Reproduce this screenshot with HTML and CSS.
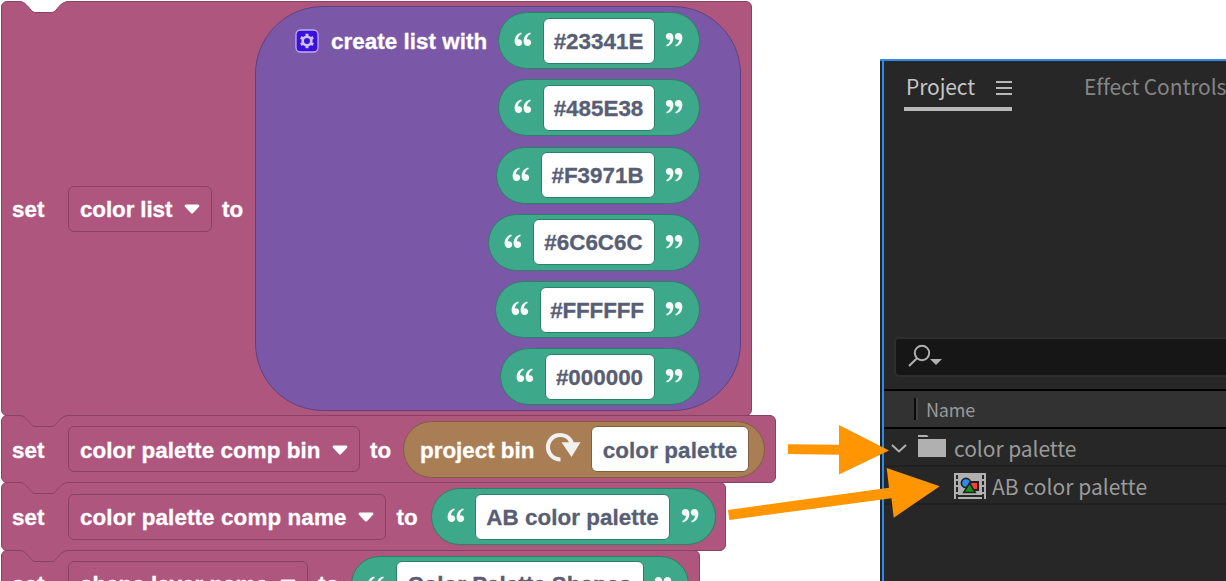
FILE: index.html
```html
<!DOCTYPE html>
<html lang="en">
<head>
<meta charset="utf-8">
<title>Color palette blocks</title>
<link rel="stylesheet" href="styles.css">
</head>
<body>
<svg class="defs" width="0" height="0">
  <symbol id="open" viewBox="0 0 18 15"><path d="M7.200 .6C3.200 1.500.6 5 .6 9.300c0 2.900 1.600 4.700 4 4.700 2.100 0 3.600-1.500 3.600-3.500S6.800 7.300 5 7.200c-.6 0-.9 0-1.200.2C4.100 4.800 5.500 2.800 7.800 1.900zM16.200 .6C12.200 1.500 9.600 5 9.600 9.300c0 2.900 1.600 4.700 4 4.700 2.100 0 3.600-1.500 3.600-3.500s-1.400-3.200-3.200-3.300c-.6 0-.9 0-1.200.2.300-2.600 1.700-4.600 4-5.500z"/></symbol>
  <symbol id="close" viewBox="0 0 18 15"><use href="#open" width="18" height="15" transform="rotate(180 9 7.500)"/></symbol>
  <symbol id="caret" viewBox="0 0 16 10"><path d="M2 .5h12c1.300 0 1.800 1.300 1 2.200L9.200 8.900c-.7.7-1.700.7-2.400 0L1 2.700C.2 1.800.7.5 2 .5z"/></symbol>
  <symbol id="notch" viewBox="0 0 50 13"><path d="M0 0V.5C5 .5 6.500 3 9 5.500S13 11.500 16 11.500H33C36 11.500 37.500 8 40 5.500S45 .5 50 .5V0z" stroke="none"/><path d="M0 .5C5 .5 6.500 3 9 5.500S13 11.500 16 11.500H33C36 11.500 37.500 8 40 5.500S45 .5 50 .5" fill="none"/></symbol>
</svg>
<main class="workspace">
  <section class="block block-list">
    <svg class="notch notch-top"><use href="#notch"/></svg>
    <span class="set">set</span>
    <span class="dropdown dd-list"><span class="t-list">color list</span><svg class="caret"><use href="#caret"/></svg></span>
    <span class="to">to</span>
    <div class="list">
      <div class="list-head">
        <svg class="gear" viewBox="0 0 24 24"><rect class="gear-box" x="1" y="1" width="22" height="22" rx="4.500"/><circle class="gear-ring" cx="12" cy="12" r="4.300"/><path class="gear-teeth" d="M12 7.500V4.800M12 16.500v2.700M8.100 9.750 5.800 8.400M15.900 14.250l2.300 1.350M8.100 14.250l-2.300 1.350M15.900 9.750l2.300-1.350"/></svg>
        <span class="t-create">create list with</span>
      </div>
      <div class="items">
        <div class="pill"><svg class="quote"><use href="#open"/></svg><span class="field w112">#23341E</span><svg class="quote"><use href="#close"/></svg></div>
        <div class="pill"><svg class="quote"><use href="#open"/></svg><span class="field w112">#485E38</span><svg class="quote"><use href="#close"/></svg></div>
        <div class="pill"><svg class="quote"><use href="#open"/></svg><span class="field w114">#F3971B</span><svg class="quote"><use href="#close"/></svg></div>
        <div class="pill"><svg class="quote"><use href="#open"/></svg><span class="field w122">#6C6C6C</span><svg class="quote"><use href="#close"/></svg></div>
        <div class="pill"><svg class="quote"><use href="#open"/></svg><span class="field w115">#FFFFFF</span><svg class="quote"><use href="#close"/></svg></div>
        <div class="pill"><svg class="quote"><use href="#open"/></svg><span class="field w110">#000000</span><svg class="quote"><use href="#close"/></svg></div>
      </div>
    </div>
  </section>
  <section class="block block-bin">
    <svg class="notch"><use href="#notch"/></svg>
    <span class="set">set</span>
    <span class="dropdown dd-bin"><span class="t-bin">color palette comp bin</span><svg class="caret"><use href="#caret"/></svg></span>
    <span class="to">to</span>
    <div class="pill bin">
      <span class="t-project">project bin</span>
      <svg class="reload" viewBox="0 0 36 30"><path d="M15.500 27.500A12.300 12.300 0 1 1 26.800 11" fill="none" stroke="#f1f1f1" stroke-width="4"/><path d="M16.500 10.200h19L26.500 25z" fill="#f1f1f1"/></svg>
      <span class="field w158 wide">color palette</span>
    </div>
  </section>
  <section class="block block-name">
    <svg class="notch"><use href="#notch"/></svg>
    <span class="set">set</span>
    <span class="dropdown dd-name"><span class="t-name">color palette comp name</span><svg class="caret"><use href="#caret"/></svg></span>
    <span class="to">to</span>
    <div class="pill"><svg class="quote"><use href="#open"/></svg><span class="field w195 wide">AB color palette</span><svg class="quote"><use href="#close"/></svg></div>
  </section>
  <section class="block block-shape">
    <svg class="notch"><use href="#notch"/></svg>
    <span class="set">set</span>
    <span class="dropdown dd-shape"><span class="t-shape">shape layer name</span><svg class="caret"><use href="#caret"/></svg></span>
    <span class="to">to</span>
    <div class="pill"><svg class="quote"><use href="#open"/></svg><span class="field w248 wide">Color Palette Shapes</span><svg class="quote"><use href="#close"/></svg></div>
  </section>
</main>
<aside class="panel">
  <nav class="tabs">
    <div class="tab active"><span class="p-project">Project</span><svg class="menu" viewBox="0 0 16 14"><path d="M0 1h16M0 7h16M0 13h16"/></svg></div>
    <div class="tab"><span class="p-effect">Effect Controls</span></div>
  </nav>
  <div class="search"><svg class="magnifier" viewBox="0 0 36 24"><circle cx="14" cy="9" r="7.200"/><path d="M9 14.200 1 22"/><path class="solid" d="M22 15h12l-6 6z"/></svg></div>
  <div class="columns"><i class="divider"></i><span class="p-name">Name</span></div>
  <div class="row">
    <svg class="chevron" viewBox="0 0 16 9"><path d="m1 1 7 6.500L15 1"/></svg>
    <svg class="folder" viewBox="0 0 28 22"><path d="M0 0h9l1.500 2H0zM0 4h28v18H0z"/></svg>
    <span class="p-color">color palette</span>
  </div>
  <div class="row child">
    <svg class="comp" viewBox="0 0 32 26"><path fill="#b0b0b0" d="M0 0h32v26H0z"/><path fill="#272727" d="M2 2h2v4H2zm0 6h2v4H2zm0 6h2v5H2zm0 7h2v5H2zM28 2h2v4h-2zm0 6h2v4h-2zm0 6h2v5h-2zm0 7h2v5h-2zM4 22h24v2H4z"/><path fill="#ff3d3d" stroke="#202020" stroke-width="2" d="M15 9h9v8h-9z"/><circle cx="12" cy="10" r="4.600" fill="#2d8ceb" stroke="#202020" stroke-width="1.700"/><path fill="#149614" stroke="#202020" stroke-width="1.500" d="m15.500 10 5.800 9.500H9.700z"/></svg>
    <span class="p-ab">AB color palette</span>
  </div>
</aside>
<svg class="arrows" viewBox="0 0 1226 581"><path d="M788 444.300l51 .4V425l50 25.500-50 24V454.700l-51-.7z"/><path d="M728 510l161-22.300-2.300-19.700 53 18.300-46 31.400-2.300-19.400-162.100 21.700z"/></svg>
</body>
</html>
```

FILE: styles.css
```css
* { box-sizing: border-box; }
body {
  margin: 0; width: 1226px; height: 581px; overflow: hidden; position: relative;
  display: flex; background: #fff;
  font: bold 22.4px/26px "Liberation Sans", Arial, sans-serif; color: #fff;
}
span { white-space: nowrap; }
svg { display: block; flex: none; }
.defs { position: absolute; }
.workspace {
  width: 880px; height: 581px; overflow: hidden; flex: none; padding: 1px 0 0 1px;
  -webkit-text-stroke: .3px currentColor;
}

.block {
  position: relative; display: flex; align-items: center;
  height: 68px; margin-bottom: -1px; padding-left: 10px;
  background: #af567f; border: 1px solid #884163; border-radius: 6px;
}
.block-list { width: 751px; height: 415px; }
.block-bin { width: 775px; height: 68px; }
.block-name { width: 725px; height: 69px; }
.block-shape { width: 699px; }
.notch { position: absolute; left: 17px; top: -1px; width: 50px; height: 13px; fill: #af567f; stroke: #884163; }
.notch-top { fill: #fff; }
.set { width: 56px; flex: none; padding-top: 2px; }
.dropdown {
  display: flex; align-items: center; justify-content: space-between; flex: none;
  height: 46px; padding: 2px 11px 0; border: 1px solid #884163; border-radius: 6px;
}
.dd-list { width: 144px; }
.dd-bin { width: 292px; letter-spacing: .08px; }
.dd-name { width: 318px; letter-spacing: .12px; }
.dd-shape { width: 240px; }
.t-list { letter-spacing: -.1px; }
.caret { width: 16px; height: 10px; fill: #fff; margin-top: -2px; }
.to { width: 33px; margin-left: 10px; flex: none; padding-top: 2px; }
.block-bin .set, .block-bin .to { padding-top: 3px; }
.block-bin .dropdown { padding-top: 4px; }
.block-name .to { width: 34px; margin-left: 10.500px; }

.list {
  display: flex; justify-content: space-between; flex: none;
  width: 486px; height: 405px; padding: 5px 40px 0 39px;
  background: #7b57a8; border: 1px solid #5c427e; border-radius: 68px;
}
.list-head { display: flex; align-items: center; gap: 12px; height: 58px; }
.t-create { padding-top: 1px; letter-spacing: .05px; }
.gear { width: 24px; height: 24px; }
.gear-box { fill: #3a0fe0; stroke: #bcb0e8; stroke-width: 1.300; }
.gear-ring { fill: none; stroke: #cdc3f3; stroke-width: 2.600; }
.gear-teeth { stroke: #cdc3f3; stroke-width: 3; }
.items { display: flex; flex-direction: column; align-items: flex-end; gap: 10.250px; }

.pill {
  display: flex; align-items: center; justify-content: space-between; flex: none;
  height: 57px; padding: 0 16px 0 15px; gap: 10.500px;
  background: #3da88a; border: 1px solid #2e7e68; border-radius: 29px;
}
.quote { width: 18px; height: 15px; fill: #fff; margin-top: -2px; opacity: .95; }
.field {
  height: 46px; padding-top: 10px; text-align: center; flex: none;
  background: #fff; color: #575e75; border: 1px solid #2e7e68; border-radius: 6px;
}
.w110 { width: 110px; }
.w112 { width: 112px; }
.w114 { width: 114px; }
.w115 { width: 115px; letter-spacing: -.15px; }
.w122 { width: 122px; }
.w158 { width: 158px; letter-spacing: .12px; }
.w195 { width: 195px; letter-spacing: .06px; }
.w248 { width: 248px; }
.bin { width: 362px; padding: 0 15px 0 16px; background: #a97e54; border-color: #7f5f3f; }
.bin .field { border-color: #7f5f3f; padding-top: 11px; }
.t-project { padding-top: 3px; }
.reload { width: 36px; height: 30px; margin: -4px -1px 0 0; }

.panel {
  position: relative; width: 346px; height: 522px; margin-top: 59px; flex: none;
  padding-left: 2px; background: #272727; border-top: 2px solid #2d8ceb;
  box-shadow: inset 2px 0 #202020, inset 4px 0 #2d8ceb;
  font: 21px/28px "Noto Sans CJK SC", "Noto Sans", sans-serif; color: #9a9a9a;
}
.tabs { display: flex; gap: 72px; height: 276px; padding: 9px 0 0 22px; }
.tab { height: 41px; padding-top: 2px; color: #858585; flex: none; }
.active {
  display: flex; justify-content: space-between; width: 108px; padding-left: 2px;
  color: #c5c5c5; border-bottom: 4px solid #b9b9b9;
}
.p-project { letter-spacing: -.1px; }
.p-effect { letter-spacing: -.1px; }
.menu { width: 16px; height: 14px; margin-top: 9px; stroke: #b9b9b9; stroke-width: 2; }
.search {
  display: flex; align-items: center; height: 40px; margin: 0 -8px 0 12px; padding-left: 12px;
  background: #161616; border: 2px solid #2e2e2e; border-radius: 5px;
}
.magnifier { width: 36px; height: 24px; fill: none; stroke: #b0b0b0; stroke-width: 2; margin-top: -2px; }
.magnifier .solid { fill: #b0b0b0; stroke: none; }
.columns {
  display: flex; align-items: center; height: 40px; margin: 12px 0 0 2px; padding-left: 30px;
  background: #323232; border: solid #000; border-width: 2px 0; font-size: 18px;
}
.divider { width: 4px; height: 22px; margin-right: 8px; background: #414141; border-left: 2px solid #090909; }
.p-name { letter-spacing: -.2px; }
.row {
  display: flex; align-items: center; height: 38px; margin-left: 2px; padding: 2px 0 0 7px;
  border-bottom: 2px solid #202020;
}
.chevron { width: 16px; height: 9px; fill: none; stroke: #b0b0b0; stroke-width: 2; }
.folder { width: 28px; height: 22px; margin: -5px 8px 0 11px; fill: #b0b0b0; }
.p-color { letter-spacing: -.05px; }
.child { padding-left: 70px; }
.comp { width: 32px; height: 26px; margin-right: 6px; }
.p-ab { letter-spacing: .05px; }
.arrows { position: absolute; left: 0; top: 0; width: 1226px; height: 581px; fill: #ff9500; }
```
